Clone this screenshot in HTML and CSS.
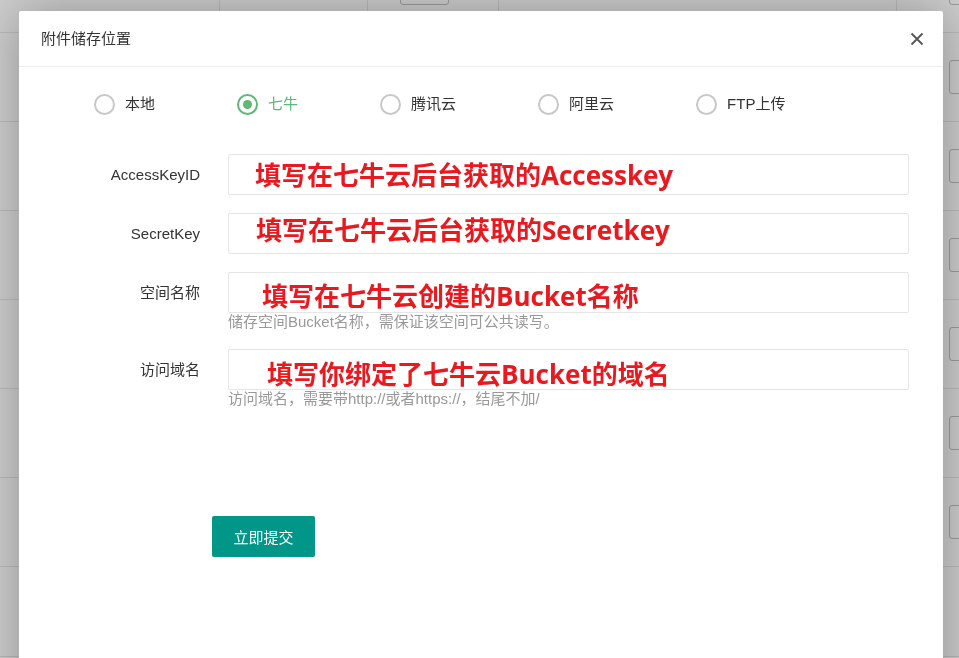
FILE: index.html
```html
<!DOCTYPE html>
<html>

<head>
    <meta charset="UTF-8">
    <meta name="viewport" content="width=device-width, initial-scale=1.0">
    <link rel="stylesheet" href="styles.css">
    <title>附件储存位置</title>
</head>

<body>
    <!-- 背景中的列表（被遮罩盖住） -->
    <div class="list">
        <div class="row"><div class="cell c1"></div><div class="cell c2"></div><div class="cell c3"><span class="mini-btn"></span></div><div class="cell c4"></div><div class="cell c5"><span class="mini-btn"></span></div></div>
        <div class="row"><div class="cell c1"></div><div class="cell c2"></div><div class="cell c3"><span class="mini-btn"></span></div><div class="cell c4"></div><div class="cell c5"><span class="mini-btn"></span></div></div>
        <div class="row"><div class="cell c1"></div><div class="cell c2"></div><div class="cell c3"><span class="mini-btn"></span></div><div class="cell c4"></div><div class="cell c5"><span class="mini-btn"></span></div></div>
        <div class="row"><div class="cell c1"></div><div class="cell c2"></div><div class="cell c3"><span class="mini-btn"></span></div><div class="cell c4"></div><div class="cell c5"><span class="mini-btn"></span></div></div>
        <div class="row"><div class="cell c1"></div><div class="cell c2"></div><div class="cell c3"><span class="mini-btn"></span></div><div class="cell c4"></div><div class="cell c5"><span class="mini-btn"></span></div></div>
        <div class="row"><div class="cell c1"></div><div class="cell c2"></div><div class="cell c3"><span class="mini-btn"></span></div><div class="cell c4"></div><div class="cell c5"><span class="mini-btn"></span></div></div>
        <div class="row"><div class="cell c1"></div><div class="cell c2"></div><div class="cell c3"><span class="mini-btn"></span></div><div class="cell c4"></div><div class="cell c5"><span class="mini-btn"></span></div></div>
        <div class="row"><div class="cell c1"></div><div class="cell c2"></div><div class="cell c3"></div><div class="cell c4"></div><div class="cell c5"></div></div>
    </div>

    <div class="shade"></div>

    <div class="layer">
        <div class="layer-title">
            附件储存位置
            <span class="layer-close">
                <svg width="14" height="14" viewBox="0 0 14 14">
                    <path d="M1.5 1.5 L12.5 12.5 M12.5 1.5 L1.5 12.5" stroke="#555" stroke-width="1.8" fill="none" />
                </svg>
            </span>
        </div>
        <div class="layer-content">
            <form class="form">
                <div class="radios">
                    <label class="radio"><i class="radio-icon"></i><span>本地</span></label>
                    <label class="radio checked"><i class="radio-icon"></i><span>七牛</span></label>
                    <label class="radio"><i class="radio-icon"></i><span>腾讯云</span></label>
                    <label class="radio"><i class="radio-icon"></i><span>阿里云</span></label>
                    <label class="radio"><i class="radio-icon"></i><span>FTP上传</span></label>
                </div>

                <div class="form-item">
                    <label class="form-label">AccessKeyID</label>
                    <div class="input-block">
                        <div class="form-input note-1"><span class="note">填写在七牛云后台获取的Accesskey</span></div>
                    </div>
                </div>
                <div class="form-item">
                    <label class="form-label">SecretKey</label>
                    <div class="input-block">
                        <div class="form-input note-2"><span class="note">填写在七牛云后台获取的Secretkey</span></div>
                    </div>
                </div>
                <div class="form-item">
                    <label class="form-label">空间名称</label>
                    <div class="input-block">
                        <div class="form-input note-3"><span class="note">填写在七牛云创建的Bucket名称</span></div>
                        <div class="form-aux">储存空间Bucket名称，需保证该空间可公共读写。</div>
                    </div>
                </div>
                <div class="form-item">
                    <label class="form-label">访问域名</label>
                    <div class="input-block">
                        <div class="form-input note-4"><span class="note">填写你绑定了七牛云Bucket的域名</span></div>
                        <div class="form-aux">访问域名，需要带http://或者https://，结尾不加/</div>
                    </div>
                </div>

                <div class="form-submit">
                    <button type="button" class="btn">立即提交</button>
                </div>
            </form>
        </div>
    </div>
</body>

</html>
```

FILE: styles.css
```css
/* 后台弹窗：附件储存位置 */
html,
body {
    height: 100%;
    overflow: hidden;
}

body {
    margin: 0;
    padding: 0;
    background-color: #fff;
    font-family: 'Liberation Sans', 'Noto Sans CJK SC', sans-serif;
    color: #333;
}

/* 背景列表 */
.list {
    margin-top: -56px;
    width: 1200px;
}

.row {
    display: flex;
    height: 89px;
    border-bottom: 1px solid #e8e8e8;
    box-sizing: border-box;
}

.row:last-child {
    height: 90px;
}

.cell {
    box-sizing: border-box;
    border-right: 1px solid #e8e8e8;
    display: flex;
    align-items: center;
}

.c1 { width: 220px; }
.c2 { width: 148px; }
.c3 { width: 131px; padding-left: 32px; }
.c4 { width: 398px; }
.c5 { width: 300px; padding-left: 52px; border-right: none; }

.mini-btn {
    display: block;
    width: 49px;
    height: 34px;
    border: 1px solid #c2c2c2;
    border-radius: 3px;
    box-sizing: border-box;
}

.shade {
    position: fixed;
    top: 0;
    left: 0;
    right: 0;
    bottom: 0;
    background-color: rgba(0, 0, 0, 0.2);
}

/* 弹层 */
.layer {
    position: fixed;
    top: 11px;
    left: 19px;
    width: 924px;
    height: 720px;
    background-color: #fff;
    border-radius: 2px;
    box-shadow: 1px 1px 50px rgba(0, 0, 0, 0.3);
}

.layer-title {
    position: relative;
    height: 55px;
    line-height: 55px;
    padding-left: 22px;
    font-size: 15px;
    color: #333;
    border-bottom: 1px solid #eee;
}

.layer-close {
    position: absolute;
    top: 21px;
    right: 19px;
    width: 14px;
    height: 14px;
    line-height: 0;
    cursor: pointer;
}

/* 表单 */
.radios {
    display: flex;
    align-items: center;
    gap: 82px;
    height: 38px;
    margin-top: 18px;
    padding-left: 75px;
}

.radio {
    display: flex;
    align-items: center;
    gap: 10px;
    font-size: 15px;
    line-height: 20px;
    color: #333;
    cursor: pointer;
}

.radio-icon {
    width: 21px;
    height: 21px;
    border: 2px solid #c8c8c8;
    border-radius: 50%;
    box-sizing: border-box;
    display: flex;
    align-items: center;
    justify-content: center;
}

.radio.checked {
    color: #5fb878;
}

.radio.checked .radio-icon {
    border-color: #5fb878;
}

.radio.checked .radio-icon::after {
    content: '';
    width: 9px;
    height: 9px;
    border-radius: 50%;
    background-color: #5fb878;
}

.form-item {
    display: grid;
    grid-template-columns: 181px 1fr;
    column-gap: 28px;
    padding-right: 34px;
    margin-top: 18px;
}

.radios + .form-item {
    margin-top: 31px;
}

.form-label {
    text-align: right;
    line-height: 41px;
    font-size: 15px;
    color: #333;
}

.form-input {
    height: 41px;
    border: 1px solid #e6e6e6;
    border-radius: 2px;
    box-sizing: border-box;
    display: flex;
    align-items: center;
}

.note {
    font-family: 'Open Sans', 'Noto Sans CJK SC', sans-serif;
    font-weight: bold;
    font-size: 26px;
    line-height: 1;
    color: #e8191f;
    white-space: nowrap;
}

.note-1 { padding-left: 26px; }
.note-2 { padding-left: 27px; padding-bottom: 7px; }
.note-3 { padding-left: 33px; padding-top: 6px; }
.note-4 { padding-left: 38px; padding-top: 8px; }

.form-aux {
    font-size: 15px;
    line-height: 18px;
    color: #999;
}

.form-submit {
    margin-top: 108px;
    padding-left: 193px;
}

.btn {
    width: 103px;
    height: 41px;
    border: none;
    border-radius: 2px;
    background-color: #009688;
    color: #fff;
    font-family: 'Liberation Sans', 'Noto Sans CJK SC', sans-serif;
    font-size: 15px;
    cursor: pointer;
}
```
